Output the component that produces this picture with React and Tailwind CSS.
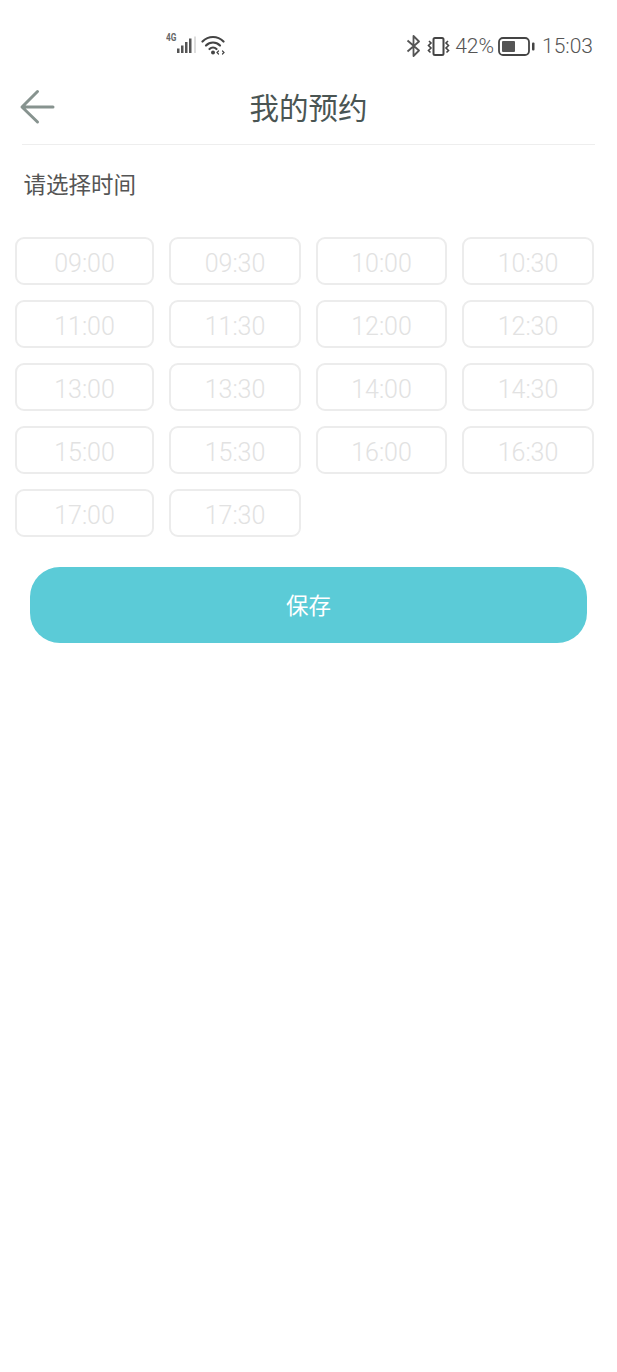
const times = [
    "09:00", "09:30", "10:00", "10:30",
    "11:00", "11:30", "12:00", "12:30",
    "13:00", "13:30", "14:00", "14:30",
    "15:00", "15:30", "16:00", "16:30",
    "17:00", "17:30",
];

const font = "font-['Roboto','Noto_Sans_CJK_SC',sans-serif]";

function SignalIcon() {
    return (
        <div className="relative w-[32px] h-[24px]">
            <span className="absolute left-[1px] top-[-1px] text-[11px] leading-[12px] font-bold text-[#666] font-['Roboto',sans-serif] scale-x-75 origin-left">
                4G
            </span>
            <svg width="32" height="24" viewBox="0 0 32 24" className="absolute left-0 top-0">
                <rect x="12" y="15.5" width="2.5" height="4.5" fill="#555" />
                <rect x="16" y="12.5" width="2.5" height="7.5" fill="#555" />
                <rect x="20" y="9" width="2.5" height="11" fill="#555" />
                <rect x="24" y="5.5" width="2.5" height="14.5" fill="#555" />
                <rect x="29" y="3.5" width="2" height="16.5" fill="#ddd" />
            </svg>
        </div>
    );
}

function WifiIcon() {
    return (
        <svg width="26" height="22" viewBox="0 0 26 22" fill="none" stroke="#444" strokeLinecap="round">
            <path d="M1.5 7.5 C7.5 1.5 16.5 1.5 22.5 7.5" strokeWidth="2.2" />
            <path d="M5 11.5 C9 7.5 15 7.5 19 11.5" strokeWidth="2.2" />
            <path d="M8.5 15 C10.5 13 13.5 13 15.5 15" strokeWidth="2.2" />
            <circle cx="12" cy="18.5" r="2" fill="#444" stroke="none" />
            <path d="M17.5 17 l-1.5 1.5 l1.5 1.5 M21.5 17 l1.5 1.5 l-1.5 1.5" strokeWidth="1.2" />
        </svg>
    );
}

function BluetoothIcon() {
    return (
        <svg width="15" height="22" viewBox="0 0 15 22" fill="none" stroke="#555" strokeWidth="1.8" strokeLinejoin="round">
            <path d="M1.5 5.5 L13 15.5 L7.5 21 V1 L13 6.5 L1.5 16.5" />
        </svg>
    );
}

function VibrateIcon() {
    return (
        <svg width="23" height="19" viewBox="0 0 23 19" fill="none" stroke="#444">
            <rect x="6.5" y="1" width="10" height="17" rx="1.5" strokeWidth="2" />
            <path d="M2 4 L4 6 L1.5 8.5 L4 11 L1.5 13.5 L3.5 15.5" strokeWidth="1.6" />
            <path d="M21 4 L19 6 L21.5 8.5 L19 11 L21.5 13.5 L19.5 15.5" strokeWidth="1.6" />
        </svg>
    );
}

function BatteryIcon() {
    return (
        <svg width="37" height="19" viewBox="0 0 37 19" fill="none">
            <rect x="1" y="1" width="30" height="17" rx="4" stroke="#444" strokeWidth="1.8" />
            <rect x="4" y="4" width="13" height="11" rx="1" fill="#555" />
            <rect x="34" y="5.5" width="2.5" height="8" rx="1" fill="#444" />
        </svg>
    );
}

function StatusBar() {
    return (
        <div className="h-[76px] flex items-start pt-[33px]">
            <div className="ml-[165px] flex items-center gap-[4px] h-[24px]">
                <SignalIcon />
                <WifiIcon />
            </div>
            <div className="ml-auto mr-[24px] flex items-center h-[26px] text-[21px] font-light text-[#555] font-['Roboto',sans-serif]">
                <BluetoothIcon />
                <span className="ml-[6px] flex"><VibrateIcon /></span>
                <span className="ml-[5px] pt-[2px]">42%</span>
                <span className="ml-[4px] flex"><BatteryIcon /></span>
                <span className="ml-[7px] pt-[2px]">15:03</span>
            </div>
        </div>
    );
}

function TimeSlot({ label }) {
    return (
        <div className="h-[48px] flex items-center justify-center pt-[5px] rounded-[9px] border-2 border-[#ececec] text-[25px] font-light text-[#e2e2e2] bg-white">
            {label}
        </div>
    );
}

export default function App() {
    return (
        <div className={`w-[617px] h-[1372px] bg-white overflow-hidden ${font}`}>
            <StatusBar />

            {/* header */}
            <div className="relative h-[69px] mx-[22px] flex items-center justify-center pb-[2px] border-b border-[#eeeeee]">
                <svg
                    width="38"
                    height="38"
                    viewBox="0 0 38 38"
                    fill="none"
                    stroke="#87938f"
                    strokeWidth="3"
                    strokeLinecap="round"
                    strokeLinejoin="round"
                    className="absolute left-[-3px] top-[12px]"
                >
                    <path d="M34 19 H3.5 M18.5 3.5 L3 19 L18.5 34" />
                </svg>
                <h1 className="text-[29.5px] font-normal text-[#4a5553]">我的预约</h1>
            </div>

            <div className="mt-[25px] ml-[23.5px] text-[22.5px] leading-[30px] text-[#555]">
                请选择时间
            </div>

            <div className="mt-[37px] ml-[15px] grid grid-cols-[139px_132px_131px_132px] gap-[15px]">
                {times.map((t) => (
                    <TimeSlot key={t} label={t} />
                ))}
            </div>

            <button className="mt-[30px] ml-[30px] w-[557px] h-[76px] pt-[4px] rounded-[30px] bg-[#5bcbd7] text-white text-[22.5px] flex items-center justify-center">
                保存
            </button>
        </div>
    );
}
